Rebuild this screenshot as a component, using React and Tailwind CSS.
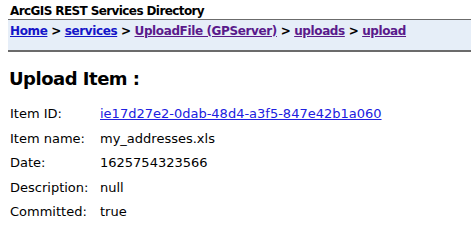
export default function App() {
  const rows = [
    ["Item ID:", "ie17d27e2-0dab-48d4-a3f5-847e42b1a060", true],
    ["Item name:", "my_addresses.xls"],
    ["Date:", "1625754323566"],
    ["Description:", "null"],
    ["Committed:", "true"],
  ];
  return (
    <div className="w-[474px] h-[251px] bg-white overflow-hidden text-black" style={{ fontFamily: '"DejaVu Sans", Verdana, sans-serif' }}>
      <div className="pl-[10px] pt-[4px] text-[12px] font-bold leading-[15px] tracking-[-0.6px]">ArcGIS REST Services Directory</div>
      <div className="ml-[8px] mr-[3px] mt-[0px] h-[33px] bg-[#e6eef8] border-t border-t-[#6b6b6b] border-b-2 border-b-[#6b6b6b] pl-[2px] pt-[3px] text-[12px] font-bold leading-[16px] tracking-[-0.38px]">
        <a href="#" className="underline text-[#1515c8]">Home</a> &gt;{" "}
        <a href="#" className="underline text-[#1515c8]">services</a> &gt;{" "}
        <a href="#" className="underline text-[#5a1a8b]">UploadFile (GPServer)</a> &gt;{" "}
        <a href="#" className="underline text-[#5a1a8b]">uploads</a> &gt;{" "}
        <a href="#" className="underline text-[#5a1a8b]">upload</a>
      </div>
      <h2 className="pl-[9px] mt-[16px] text-[18px] font-bold leading-[22px] tracking-[-0.5px]">Upload Item :</h2>
      <div className="pl-[10px] mt-[16px] text-[13px] leading-[16px] flex flex-col gap-[8.5px]">
        {rows.map(([k, v, link]) => (
          <div key={k} className="flex">
            <div className="w-[90px]">{k}</div>
            {link ? (
              <a href="#" className="underline text-[#2020e0]">{v}</a>
            ) : (
              <div>{v}</div>
            )}
          </div>
        ))}
      </div>
    </div>
  );
}
